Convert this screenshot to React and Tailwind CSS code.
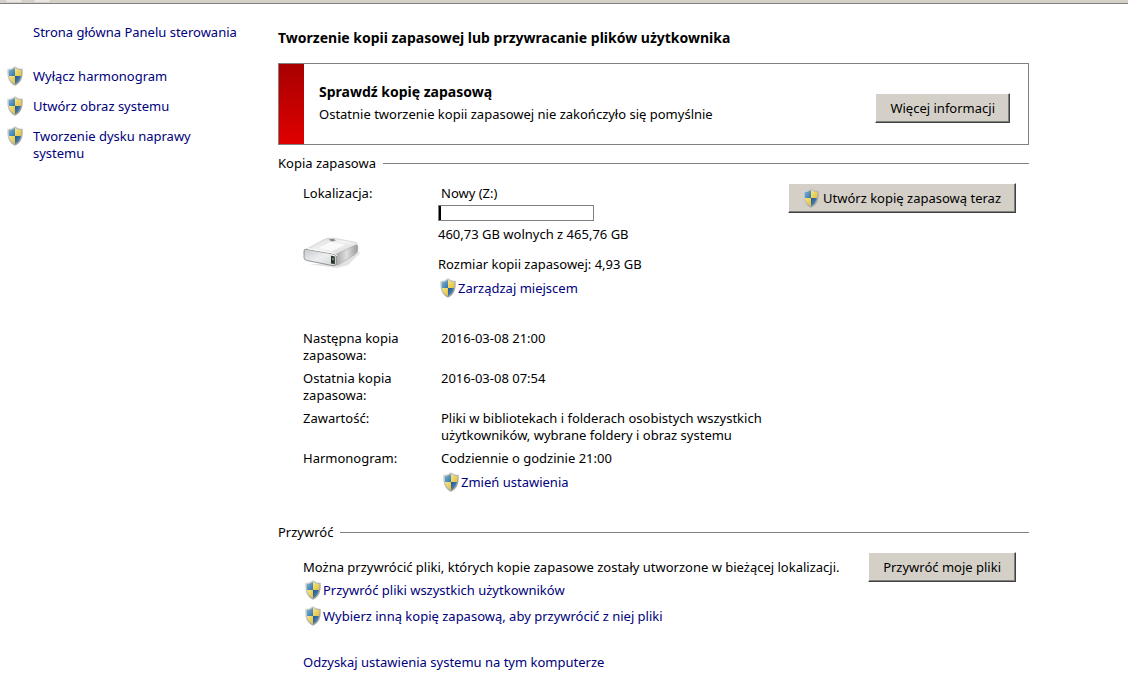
const sidebarTasks = [
  "Wyłącz harmonogram",
  "Utwórz obraz systemu",
  "Tworzenie dysku naprawy systemu",
];

const disk = {
  name: "Nowy (Z:)",
  usedPercent: 1.3,
  space: "460,73 GB wolnych z 465,76 GB",
  backupSize: "4,93 GB",
};

const details = [
  { label: "Następna kopia zapasowa:", value: "2016-03-08 21:00" },
  { label: "Ostatnia kopia zapasowa:", value: "2016-03-08 07:54" },
  {
    label: "Zawartość:",
    value:
      "Pliki w bibliotekach i folderach osobistych wszystkich użytkowników, wybrane foldery i obraz systemu",
  },
];

function Shield() {
  return (
    <svg viewBox="0 0 16 20" className="h-5 w-4 shrink-0" aria-hidden="true">
      <defs>
        <linearGradient id="shieldRim" x1="0" y1="0" x2="1" y2="1">
          <stop offset="0" stopColor="#d9dbd8" />
          <stop offset="0.5" stopColor="#b9bab2" />
          <stop offset="1" stopColor="#8f918c" />
        </linearGradient>
        <linearGradient id="shieldBlueTop" x1="0" y1="0" x2="1" y2="1">
          <stop offset="0" stopColor="#9cc6dc" />
          <stop offset="1" stopColor="#2f76ac" />
        </linearGradient>
        <linearGradient id="shieldBlueBottom" x1="0" y1="0" x2="1" y2="1">
          <stop offset="0" stopColor="#1f5690" />
          <stop offset="1" stopColor="#6fa6d4" />
        </linearGradient>
        <linearGradient id="shieldYellow" x1="0" y1="0" x2="1" y2="1">
          <stop offset="0" stopColor="#f8ec96" />
          <stop offset="1" stopColor="#e3b92c" />
        </linearGradient>
        <clipPath id="shieldBody">
          <path d="M8 1.9C6.3 3.1 4.2 3.9 1.8 4C1.4 10.8 3 15.5 8 18.1C13 15.5 14.6 10.8 14.2 4C11.8 3.9 9.7 3.1 8 1.9Z" />
        </clipPath>
      </defs>
      <path
        d="M8 0.2C6 1.9 3.5 2.8 0.4 2.8C-0.3 11.2 1.9 16.9 8 19.8C14.1 16.9 16.3 11.2 15.6 2.8C12.5 2.8 10 1.9 8 0.2Z"
        fill="url(#shieldRim)"
      />
      <g clipPath="url(#shieldBody)">
        <path d="M0 0H8V10H0Z" fill="url(#shieldBlueTop)" />
        <path d="M8 0H16V10H8Z" fill="url(#shieldYellow)" />
        <path d="M0 10H8V20H0Z" fill="url(#shieldYellow)" />
        <path d="M8 10H16V20H8Z" fill="url(#shieldBlueBottom)" />
      </g>
    </svg>
  );
}

function DriveIcon() {
  return (
    <svg viewBox="0 0 58 32" className="h-8 w-[58px]" aria-hidden="true">
      <defs>
        <linearGradient id="driveTop" x1="0" y1="0" x2="1" y2="1">
          <stop offset="0" stopColor="#d0d0d0" />
          <stop offset="0.5" stopColor="#f6f6f6" />
          <stop offset="1" stopColor="#c9c9c9" />
        </linearGradient>
        <linearGradient id="driveFront" x1="0" y1="0" x2="1" y2="1">
          <stop offset="0" stopColor="#c6c8cb" />
          <stop offset="0.5" stopColor="#eceef0" />
          <stop offset="1" stopColor="#cfd1d3" />
        </linearGradient>
        <linearGradient id="driveSide" x1="0" y1="0" x2="1" y2="0">
          <stop offset="0" stopColor="#a5a5a5" />
          <stop offset="0.5" stopColor="#dedede" />
          <stop offset="1" stopColor="#9a9a9a" />
        </linearGradient>
      </defs>
      <path d="M6 27L34 31L45 28L57 16L54 13L30 27Z" fill="#e2e2e2" />
      <path
        d="M2 13L22 2Q26 0.6 31 1.2L52 5.2Q56 6.2 53 8.5L34 17.5Z"
        fill="url(#driveTop)"
        stroke="#c4c4c4"
        strokeWidth="0.6"
      />
      <path d="M13 11.5L28 4.2L44 7.5L29 14.5Z" fill="#f9f9f9" stroke="#dedede" strokeWidth="0.5" />
      <path d="M25.5 2.6L30 1.8L33 3.2L29 4.6Z" fill="#858585" />
      <path
        d="M33 17.5L52.5 8Q55 7.5 54.8 9.5V13Q54.6 15.5 51.6 17.7L36 27.6Q33 29 32.5 27Z"
        fill="url(#driveSide)"
        stroke="#a2a2a2"
        strokeWidth="0.5"
      />
      <path
        d="M3 12.2L31 17.2Q33.3 17.6 33.3 19.9V26.4Q33 29.2 30 28.7L3.5 23.4Q1 22.8 1 20.5V14.1Q1 12 3 12.2Z"
        fill="url(#driveFront)"
        stroke="#8a8a8a"
        strokeWidth="0.9"
      />
      <path d="M4 11.6L31 16.4Q33 17 34 19" stroke="#fff" strokeWidth="0.9" fill="none" />
      <path d="M28 18.8L31.8 19.4V27L28 26.4Z" fill="#252d25" />
      <path d="M29.3 20.8H30.6V23.3H29.3Z" fill="#8bb46c" />
    </svg>
  );
}

function TaskLink({ children }) {
  return (
    <a href="#" className="flex w-fit items-center gap-0.5 pl-0.5 text-[#00007b] hover:underline">
      <span className="-mt-1.5 -mb-1">
        <Shield />
      </span>
      {children}
    </a>
  );
}

function Button({ shield, children }) {
  return (
    <button
      type="button"
      className="flex h-[30px] shrink-0 items-center gap-1 border border-t-white border-r-[#404040] border-b-[#404040] border-l-white bg-[#d4d0c8] px-3.5 whitespace-nowrap shadow-[inset_-1px_-1px_0_#808080]"
    >
      {shield && <Shield />}
      {children}
    </button>
  );
}

function SectionHeading({ children }) {
  return (
    <div className="flex items-center gap-[7px]">
      <h2>{children}</h2>
      <div className="h-px flex-1 bg-[#808080]" />
    </div>
  );
}

function Sidebar() {
  return (
    <nav className="w-[278px] shrink-0 pt-5 pl-[7px] text-[#00007b]">
      <a href="#" className="ml-[26px] block hover:underline">
        Strona główna Panelu sterowania
      </a>
      <ul className="mt-[27px] space-y-[13px]">
        {sidebarTasks.map((task) => (
          <li key={task}>
            <a href="#" className="flex items-start gap-2.5 hover:underline">
              <span className="-mt-0.5 -mb-1">
                <Shield />
              </span>
              <span className="max-w-[180px]">{task}</span>
            </a>
          </li>
        ))}
      </ul>
    </nav>
  );
}

function App() {
  return (
    <div className="min-h-screen bg-white font-['Noto_Sans','Open_Sans',sans-serif] text-[13px] leading-[17px] text-black">
      <div className="flex h-1 gap-3 overflow-hidden border-b border-[#808080] bg-[#d4d0c8] pl-1.5">
        <div className="h-0.5 w-4 rounded-b-full bg-[#e9e7e3]" />
        <div className="h-0.5 w-4 rounded-b-full bg-[#e9e7e3]" />
      </div>

      <div className="flex">
        <Sidebar />

        <main className="mr-[99px] min-w-0 flex-1 pt-[25px]">
          <h1 className="text-sm leading-[17px] font-bold">
            Tworzenie kopii zapasowej lub przywracanie plików użytkownika
          </h1>

          <section className="mt-[17px] flex min-h-[82px] border border-[#808080]">
            <div className="w-[25px] shrink-0 bg-linear-to-b from-[#a80000] to-[#e00000]" />
            <div className="flex flex-1 items-center justify-between pr-[18px] pl-[15px]">
              <div className="space-y-1.5 pb-0.5">
                <h2 className="text-sm leading-[17px] font-bold">Sprawdź kopię zapasową</h2>
                <p>Ostatnie tworzenie kopii zapasowej nie zakończyło się pomyślnie</p>
              </div>
              <div className="mt-2">
                <Button>Więcej informacji</Button>
              </div>
            </div>
          </section>

          <section className="mt-2.5">
            <SectionHeading>Kopia zapasowa</SectionHeading>

            <div className="mt-[11px] flex items-start justify-between pr-[13px] pl-[25px]">
              <dl className="grid grid-cols-[135px_330px] gap-y-1.5 pt-0.5">
                <dt>
                  Lokalizacja:
                  <div className="mt-[35px]">
                    <DriveIcon />
                  </div>
                </dt>
                <dd className="pb-[27px]">
                  <p className="pl-[3px]">{disk.name}</p>
                  <div
                    role="progressbar"
                    aria-label="Zajęte miejsce"
                    aria-valuenow={disk.usedPercent}
                    className="mt-[3px] h-4 w-[156px] border border-[#808080]"
                  >
                    <div className="h-full bg-black" style={{ width: `${disk.usedPercent}%` }} />
                  </div>
                  <p className="mt-[5px]">{disk.space}</p>
                  <p className="mt-[13px]">Rozmiar kopii zapasowej: {disk.backupSize}</p>
                  <div className="mt-[7px]">
                    <TaskLink>Zarządzaj miejscem</TaskLink>
                  </div>
                </dd>

                {details.map((item) => (
                  <div key={item.label} className="contents">
                    <dt className="pr-8">{item.label}</dt>
                    <dd className="pl-[3px]">{item.value}</dd>
                  </div>
                ))}

                <dt>Harmonogram:</dt>
                <dd className="pl-[3px]">
                  Codziennie o godzinie 21:00
                  <div className="mt-[7px]">
                    <TaskLink>Zmień ustawienia</TaskLink>
                  </div>
                </dd>
              </dl>

              <Button shield>Utwórz kopię zapasową teraz</Button>
            </div>
          </section>

          <section className="mt-[33px]">
            <SectionHeading>Przywróć</SectionHeading>

            <div className="mt-[11px] pl-[25px]">
              <div className="flex items-center justify-between pr-[13px]">
                <p>
                  Można przywrócić pliki, których kopie zapasowe zostały utworzone w bieżącej
                  lokalizacji.
                </p>
                <Button>Przywróć moje pliki</Button>
              </div>
              <div className="space-y-[9px]">
                <TaskLink>Przywróć pliki wszystkich użytkowników</TaskLink>
                <TaskLink>Wybierz inną kopię zapasową, aby przywrócić z niej pliki</TaskLink>
              </div>
              <a href="#" className="mt-[29px] block w-fit text-[#00007b] hover:underline">
                Odzyskaj ustawienia systemu na tym komputerze
              </a>
            </div>
          </section>
        </main>
      </div>
    </div>
  );
}

export default App;
